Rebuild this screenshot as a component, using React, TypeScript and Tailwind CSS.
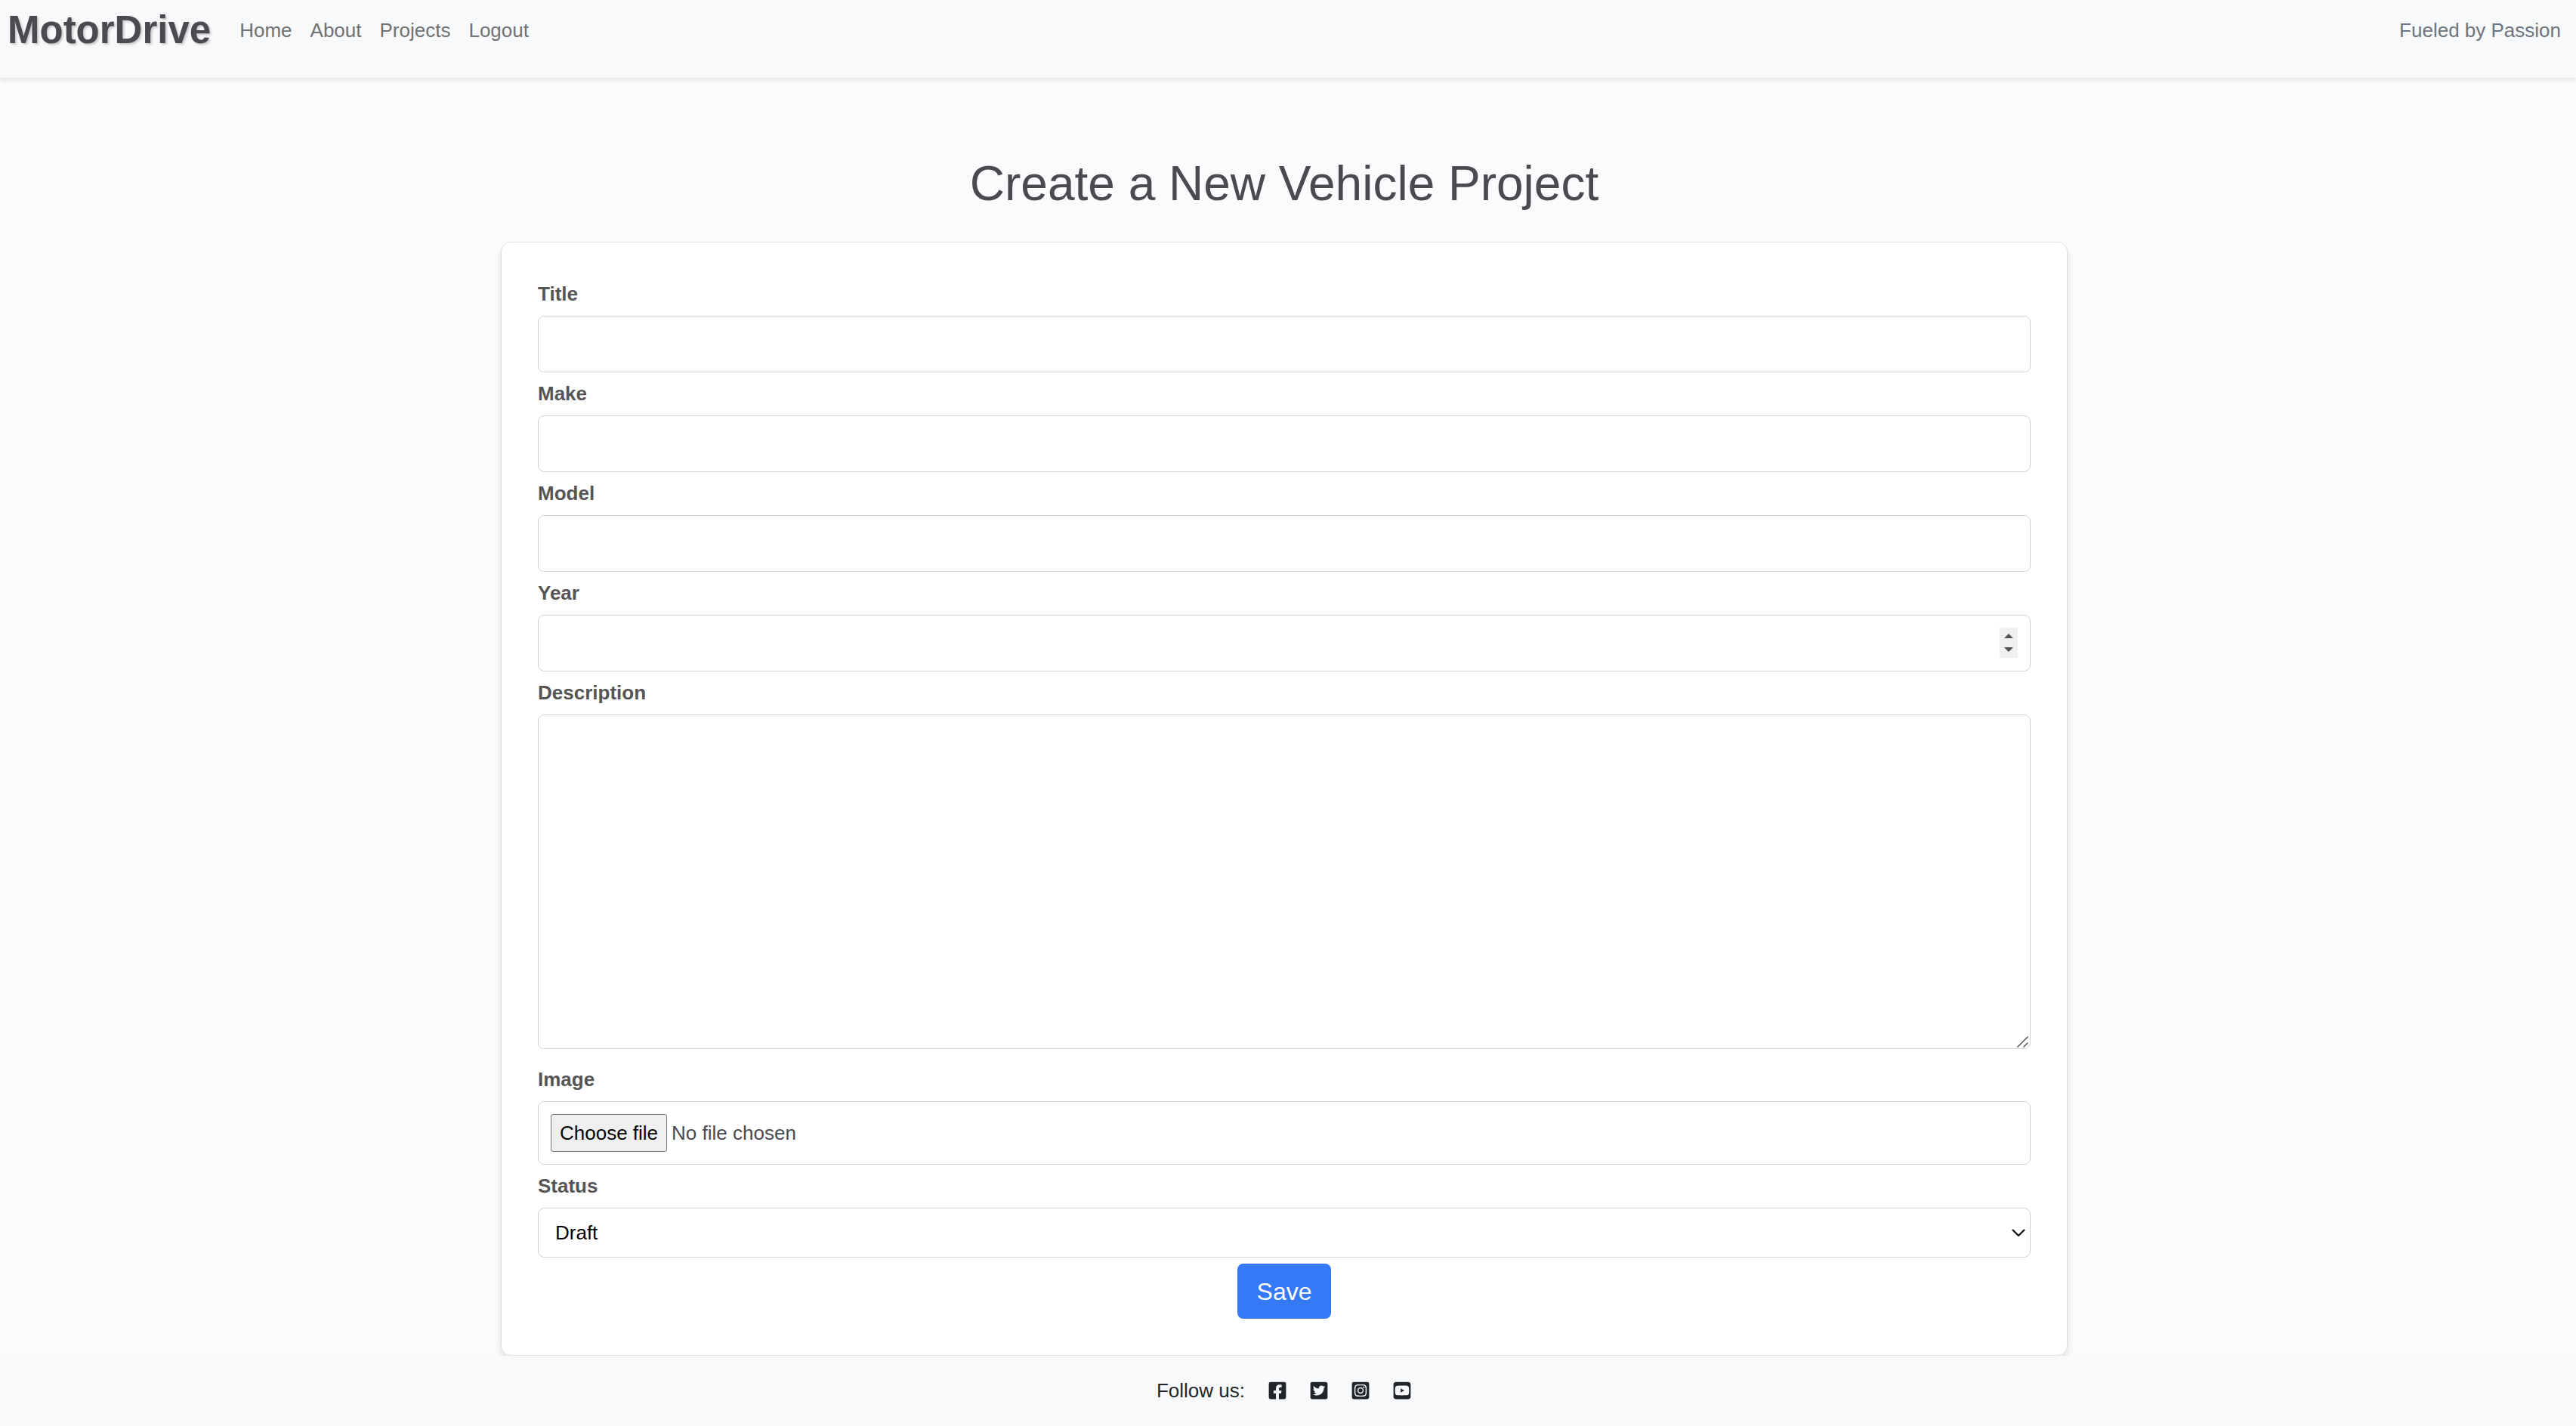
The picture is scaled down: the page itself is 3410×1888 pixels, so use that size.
import React from "react";
import {
  FaFacebookSquare,
  FaTwitterSquare,
  FaInstagramSquare,
} from "react-icons/fa";
import { FaSquareYoutube } from "react-icons/fa6";

const navLinks = ["Home", "About", "Projects", "Logout"];

const boxClass =
  "block w-full rounded-lg border border-[#ced4da] bg-white px-4 text-[26px] leading-[38px] text-[#495057] outline-none";

function Label({ htmlFor, children }: { htmlFor: string; children: React.ReactNode }) {
  return (
    <label htmlFor={htmlFor} className="block h-[57px] pt-[15px] leading-[26px] font-bold text-[#555]">
      {children}
    </label>
  );
}

function TextField({ id, label }: { id: string; label: string }) {
  return (
    <div>
      <Label htmlFor={id}>{label}</Label>
      <input id={id} name={id} type="text" className={`${boxClass} h-[75px]`} />
    </div>
  );
}

function YearField() {
  return (
    <div>
      <Label htmlFor="year">Year</Label>
      <div className="relative">
        <input
          id="year"
          name="year"
          type="number"
          className={`${boxClass} h-[75px] [appearance:textfield] [&::-webkit-inner-spin-button]:appearance-none`}
        />
        <svg
          viewBox="0 0 24 40"
          className="pointer-events-none absolute top-[17px] right-[17px] h-10 w-6"
          aria-hidden="true"
        >
          <rect width="24" height="40" fill="#f0f0f0" />
          <path d="M6 14 L12 8 L18 14 Z M6 26 L12 32 L18 26 Z" fill="#505050" />
        </svg>
      </div>
    </div>
  );
}

function DescriptionField() {
  return (
    <div className="mb-3">
      <Label htmlFor="description">Description</Label>
      <div className="relative">
        <textarea
          id="description"
          name="description"
          className={`${boxClass} h-[443px] py-[10px] [&::-webkit-resizer]:hidden`}
        />
        <svg
          viewBox="0 0 15 15"
          className="pointer-events-none absolute right-[3px] bottom-[2px] size-[15px]"
          fill="none"
          stroke="#555"
          strokeWidth="1.5"
          aria-hidden="true"
        >
          <path d="M0.5 14.5 L14.5 0.5 M8.5 14.5 L14.5 8.5" />
        </svg>
      </div>
    </div>
  );
}

function ImageField() {
  return (
    <div>
      <Label htmlFor="image">Image</Label>
      <div className={`${boxClass} relative flex h-[84px] items-center gap-1.5`}>
        <span className="rounded-[3px] border border-[#767676] bg-[#efefef] px-[11px] leading-[48px] text-black">
          Choose file
        </span>
        <span className="text-[#4a4a4f]">No file chosen</span>
        <input id="image" name="image" type="file" className="absolute inset-0 cursor-pointer opacity-0" />
      </div>
    </div>
  );
}

function StatusField() {
  return (
    <div>
      <Label htmlFor="status">Status</Label>
      <div className="relative">
        <select
          id="status"
          name="status"
          className="block h-[66px] w-full appearance-none rounded-lg border border-[#ced4da] bg-white px-[22px] text-[26px] text-black outline-none"
        >
          <option>Draft</option>
          <option>Published</option>
        </select>
        <svg
          viewBox="0 0 18 10"
          className="pointer-events-none absolute top-7 right-[7px] h-[10px] w-[18px]"
          fill="none"
          stroke="black"
          strokeWidth="2"
          aria-hidden="true"
        >
          <path d="M1 1 L9 9 L17 1" />
        </svg>
      </div>
    </div>
  );
}

export default function App() {
  return (
    <div className="flex min-h-screen flex-col bg-[#fafbfc] font-['Liberation_Sans',Arial,sans-serif] text-[26px] leading-[38px]">
      <header className="flex h-[103px] items-start bg-[#f8f9fb] pr-5 pl-[10px] shadow-[0_3px_6px_rgba(0,0,0,0.1)]">
        <a
          href="#"
          className="mr-[38px] text-[51px] leading-[79px] font-bold text-[#4a4a4f] [text-shadow:2px_2px_3px_rgba(0,0,0,0.2)]"
        >
          MotorDrive
        </a>
        <nav className="flex flex-1 gap-6 pt-[21px]">
          {navLinks.map((link) => (
            <a key={link} href="#" className="text-[#707172]">
              {link}
            </a>
          ))}
        </nav>
        <span className="pt-[21px] text-[#6c757d]">Fueled by Passion</span>
      </header>

      <main className="mr-[10px] flex flex-1 flex-col items-center pt-[102px]">
        <h1 className="text-[64px] leading-[77px] text-[#4a4a4f]">Create a New Vehicle Project</h1>
        <form
          className="mt-[38px] w-full max-w-[2074px] flex-1 rounded-[13px] border border-[#dfdfdf] bg-white px-12 pt-10 pb-12 shadow-[0_6px_10px_rgba(0,0,0,0.1)]"
          onSubmit={(e) => e.preventDefault()}
        >
          <TextField id="title" label="Title" />
          <TextField id="make" label="Make" />
          <TextField id="model" label="Model" />
          <YearField />
          <DescriptionField />
          <ImageField />
          <StatusField />
          <div className="mt-2 flex justify-center">
            <button
              type="submit"
              className="h-[73px] rounded-lg bg-[#3579f6] px-[26px] text-[32px] text-white"
            >
              Save
            </button>
          </div>
        </form>
      </main>

      <footer className="relative flex h-[93px] items-center justify-center bg-[#f8f9fa] pr-[10px] pb-[2px] text-[#212529]">
        <span className="mr-[30px]">Follow us:</span>
        <div className="flex gap-[29px]">
          <a href="#" aria-label="Facebook">
            <FaFacebookSquare />
          </a>
          <a href="#" aria-label="Twitter">
            <FaTwitterSquare />
          </a>
          <a href="#" aria-label="Instagram">
            <FaInstagramSquare />
          </a>
          <a href="#" aria-label="YouTube">
            <FaSquareYoutube />
          </a>
        </div>
      </footer>
    </div>
  );
}
